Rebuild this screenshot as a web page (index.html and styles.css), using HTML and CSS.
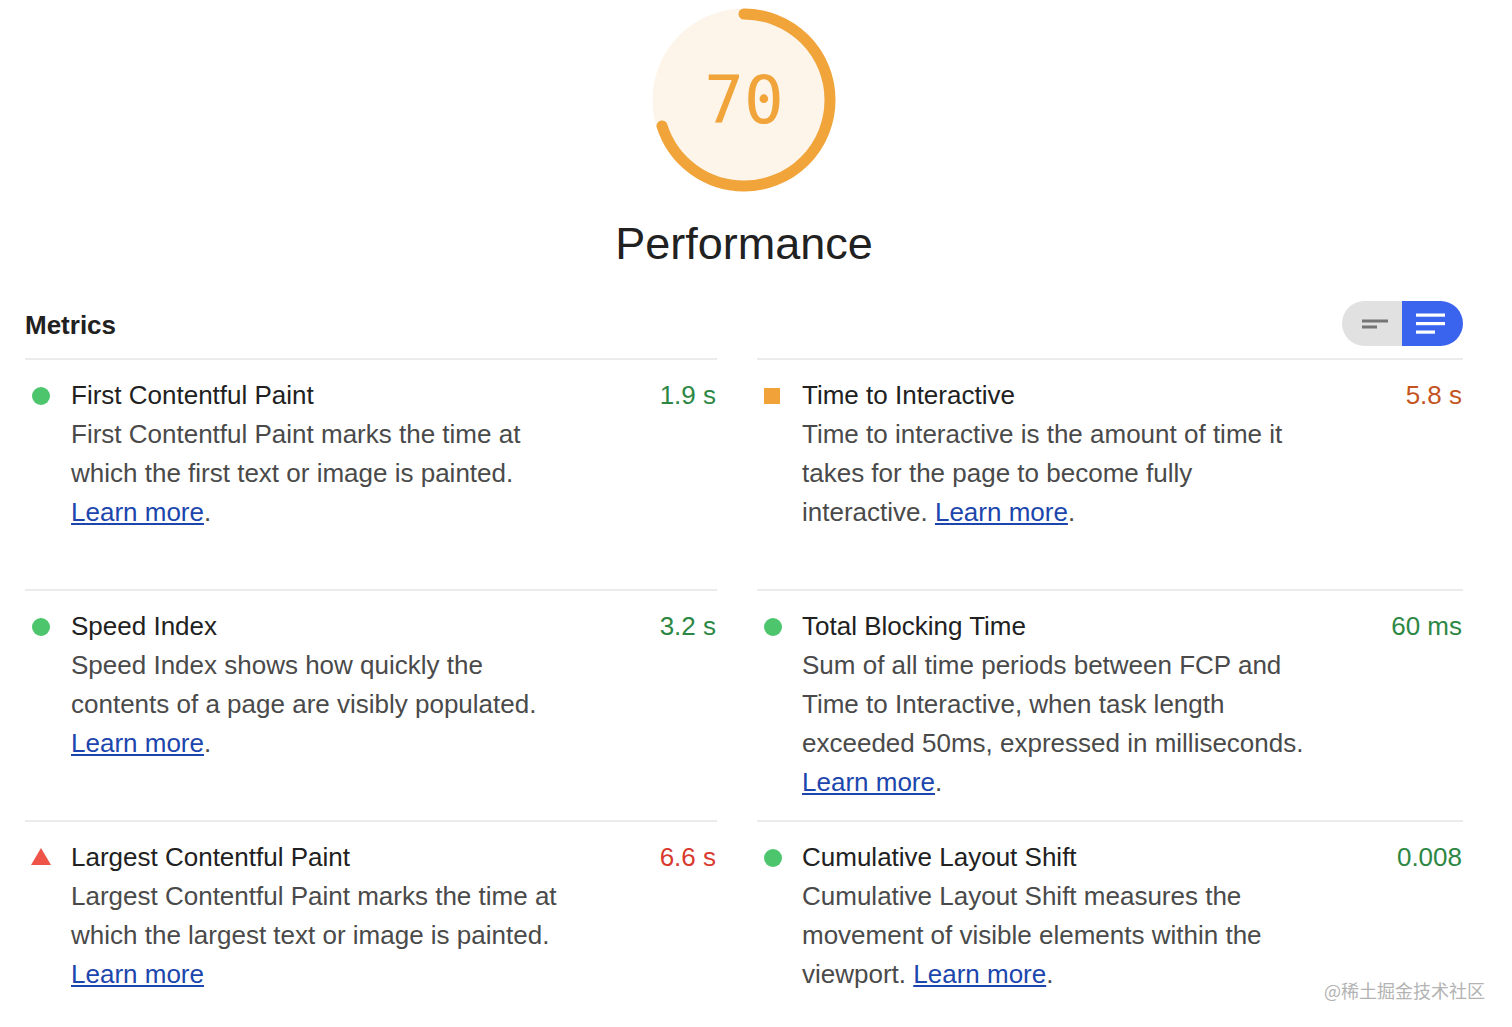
FILE: index.html
```html
<!DOCTYPE html>
<html lang="en">
<head>
<meta charset="utf-8">
<title>Performance</title>
<link rel="stylesheet" href="styles.css">
</head>
<body>
<div class="page">
  <header class="score">
    <svg class="gauge" width="184" height="184" viewBox="0 0 184 184" aria-hidden="false">
      <circle class="gauge-base" cx="92" cy="92" r="86"></circle>
      <circle class="gauge-arc" cx="92" cy="92" r="86" transform="rotate(-90 92 92)"></circle>
      <text class="gauge-number" x="92" y="115" text-anchor="middle">70</text>
    </svg>
    <h1 class="score-title">Performance</h1>
  </header>

  <section class="metrics">
    <div class="metrics-header">
      <h2 class="metrics-heading">Metrics</h2>
      <div class="toggle">
        <span class="toggle-btn toggle-off">
          <svg width="60" height="45" viewBox="0 0 60 45">
            <rect x="20" y="18.5" width="26" height="3" fill="#757575"></rect>
            <rect x="20" y="24.5" width="15" height="3" fill="#757575"></rect>
          </svg>
        </span>
        <span class="toggle-btn toggle-on">
          <svg width="61" height="45" viewBox="0 0 61 45">
            <rect x="14" y="12.5" width="29" height="3.2" fill="#ffffff"></rect>
            <rect x="14" y="21" width="29" height="3.2" fill="#ffffff"></rect>
            <rect x="14" y="29.5" width="19" height="3.2" fill="#ffffff"></rect>
          </svg>
        </span>
      </div>
    </div>

    <div class="metric-grid">
      <div class="metric">
        <span class="icon-box"><span class="icon dot"></span></span>
        <div class="metric-body">
          <div class="metric-head"><span class="metric-title">First Contentful Paint</span><span class="metric-value pass">1.9 s</span></div>
          <div class="metric-desc">First Contentful Paint marks the time at which the first text or image is painted. <a href="#">Learn more</a>.</div>
        </div>
      </div>
      <div class="metric">
        <span class="icon-box icon-box-right"><span class="icon square"></span></span>
        <div class="metric-body">
          <div class="metric-head"><span class="metric-title">Time to Interactive</span><span class="metric-value average">5.8 s</span></div>
          <div class="metric-desc">Time to interactive is the amount of time it takes for the page to become fully interactive. <a href="#">Learn more</a>.</div>
        </div>
      </div>
      <div class="metric">
        <span class="icon-box"><span class="icon dot"></span></span>
        <div class="metric-body">
          <div class="metric-head"><span class="metric-title">Speed Index</span><span class="metric-value pass">3.2 s</span></div>
          <div class="metric-desc">Speed Index shows how quickly the contents of a page are visibly populated. <a href="#">Learn more</a>.</div>
        </div>
      </div>
      <div class="metric">
        <span class="icon-box icon-box-right"><span class="icon dot"></span></span>
        <div class="metric-body">
          <div class="metric-head"><span class="metric-title">Total Blocking Time</span><span class="metric-value pass">60 ms</span></div>
          <div class="metric-desc">Sum of all time periods between FCP and Time to Interactive, when task length exceeded 50ms, expressed in milliseconds. <a href="#">Learn more</a>.</div>
        </div>
      </div>
      <div class="metric">
        <span class="icon-box"><span class="icon triangle"></span></span>
        <div class="metric-body">
          <div class="metric-head"><span class="metric-title">Largest Contentful Paint</span><span class="metric-value fail">6.6 s</span></div>
          <div class="metric-desc">Largest Contentful Paint marks the time at which the largest text or image is painted. <a href="#">Learn more</a></div>
        </div>
      </div>
      <div class="metric">
        <span class="icon-box icon-box-right"><span class="icon dot"></span></span>
        <div class="metric-body">
          <div class="metric-head"><span class="metric-title">Cumulative Layout Shift</span><span class="metric-value pass">0.008</span></div>
          <div class="metric-desc">Cumulative Layout Shift measures the movement of visible elements within the viewport. <a href="#">Learn more</a>.</div>
        </div>
      </div>
    </div>
  </section>
</div>
<div class="watermark">@稀土掘金技术社区</div>
</body>
</html>
```

FILE: styles.css
```css
html, body {
  margin: 0;
  padding: 0;
  background: #ffffff;
}

body {
  font-family: "Liberation Sans", Arial, Helvetica, sans-serif;
  color: #212121;
  position: relative;
  height: 1027px;
  overflow: hidden;
}

.page {
  width: 1438px;
  margin-left: 25px;
}

.score {
  display: flex;
  flex-direction: column;
  align-items: center;
  padding-top: 8px;
}

.gauge {
  display: block;
}

.gauge-base {
  fill: #fdf5ea;
  stroke: #fdf5ea;
  stroke-width: 11;
}

.gauge-arc {
  fill: none;
  stroke: #f0a43a;
  stroke-width: 11;
  stroke-linecap: round;
  stroke-dasharray: 378.2 540.4;
}

.gauge-number {
  font-family: "DejaVu Sans Mono", monospace;
  font-size: 66px;
  fill: #f0a43a;
}

.score-title {
  margin: 25px 0 0 0;
  font-size: 45px;
  line-height: 54px;
  font-weight: 400;
  color: #212121;
}

.metrics-header {
  display: flex;
  justify-content: space-between;
  align-items: center;
  height: 45px;
  margin-top: 30px;
  margin-bottom: 12px;
}

.metrics-heading {
  margin: 0;
  font-size: 26px;
  font-weight: 700;
  line-height: 30px;
  color: #212121;
  padding-top: 2px;
}

.toggle {
  display: flex;
  width: 121px;
  height: 45px;
  border-radius: 23px;
  overflow: hidden;
}

.toggle-btn {
  display: block;
  height: 45px;
}

.toggle-btn svg {
  display: block;
}

.toggle-off {
  width: 60px;
  background: #e1e1e1;
}

.toggle-on {
  width: 61px;
  background: #3b64ee;
}

.metric-grid {
  display: grid;
  grid-template-columns: 692px 706px;
  column-gap: 40px;
  grid-auto-rows: 1fr;
}

.metric {
  display: flex;
  border-top: 2px solid #ebebeb;
  padding: 16px 0 18px 0;
}

.icon-box {
  flex: 0 0 46px;
  padding-left: 7px;
  box-sizing: border-box;
}

.icon-box-right {
  flex-basis: 45px;
  padding-left: 6px;
}

.icon {
  display: block;
}

.dot {
  width: 18px;
  height: 18px;
  border-radius: 50%;
  background: #4cc56c;
  margin-top: 10.5px;
}

.icon-box-right .dot {
  margin-left: 1px;
}

.square {
  width: 16px;
  height: 16px;
  background: #f1a33a;
  margin-top: 11.5px;
  margin-left: 1px;
}

.triangle {
  width: 0;
  height: 0;
  border-left: 10px solid transparent;
  border-right: 10px solid transparent;
  border-bottom: 17px solid #ee5448;
  margin-top: 10px;
  margin-left: -1px;
}

.metric-body {
  flex: 1 1 auto;
  min-width: 0;
}

.metric-head {
  display: flex;
  justify-content: space-between;
  align-items: baseline;
}

.metric-title,
.metric-value {
  font-size: 26px;
  line-height: 39px;
}

.metric-title {
  color: #212121;
}

.metric-value {
  padding-right: 1px;
}

.metric-value.pass {
  color: #2d8744;
}

.metric-value.average {
  color: #c4541e;
}

.metric-value.fail {
  color: #d93a2e;
}

.metric-desc {
  max-width: 508px;
  font-size: 26px;
  line-height: 39px;
  color: #4a4a4a;
}

.metric-desc a {
  color: #1c46ad;
  text-decoration: underline;
}

.watermark {
  position: absolute;
  right: 27px;
  top: 979px;
  font-family: "Noto Sans CJK SC", "Liberation Sans", sans-serif;
  font-size: 18px;
  line-height: 22px;
  color: #b3b3b3;
  white-space: nowrap;
}
```
